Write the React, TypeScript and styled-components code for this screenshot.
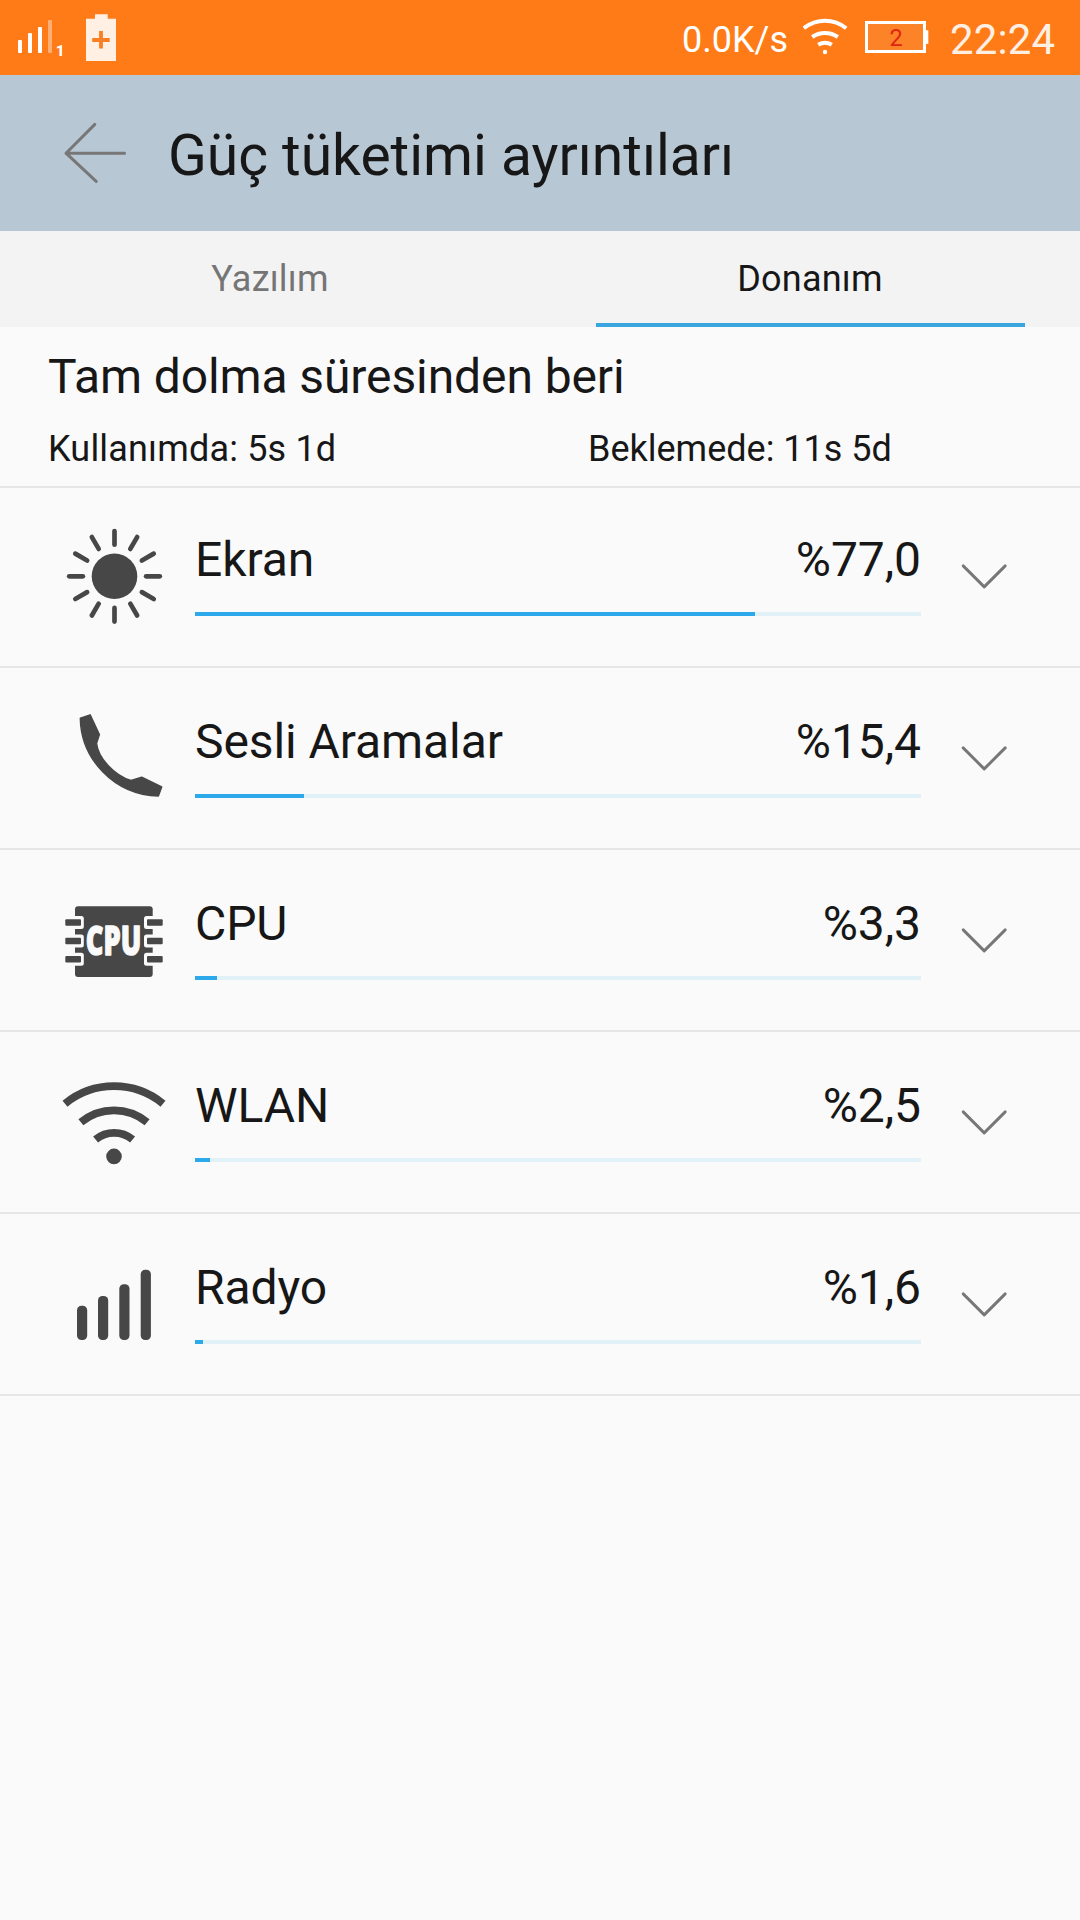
import React from 'react';
import styled, { createGlobalStyle } from 'styled-components';

const GlobalStyle = createGlobalStyle`
  body {
    margin: 0;
    background: #fafafa;
  }
`;

const ink = '#171717';
const iconInk = '#474747';
const cream = '#fff0e3';

const Screen = styled.div`
  display: flex;
  flex-direction: column;
  width: 1080px;
  height: 1920px;
  overflow: hidden;
  background: #fafafa;
  color: ${ink};
  font-family: Roboto, 'Noto Sans', sans-serif;
`;

const StatusBar = styled.header`
  display: flex;
  justify-content: space-between;
  height: 75px;
  flex: none;
  background: #ff7b17;
`;

const StatusGroup = styled.div`
  display: flex;
  align-items: flex-start;
`;

const Drawing = styled.svg`
  display: block;
  flex: none;
`;

const NetSpeed = styled.span`
  width: 121px;
  padding-top: 19px;
  font-size: 36px;
  line-height: 42px;
  color: #fff;
  white-space: nowrap;
`;

const Clock = styled.span`
  width: 130px;
  padding-top: 15px;
  font-size: 42px;
  line-height: 50px;
  letter-spacing: 0.1px;
  color: ${cream};
  white-space: nowrap;
`;

const TitleBar = styled.div`
  display: flex;
  height: 156px;
  flex: none;
  background: #b7c7d4;
`;

const Title = styled.h1`
  margin: 0;
  padding-top: 48px;
  font-size: 57px;
  font-weight: 400;
  line-height: 66px;
  letter-spacing: -0.03px;
  white-space: nowrap;
`;

const Tabs = styled.nav`
  display: grid;
  grid-template-columns: 1fr 1fr;
  height: 96px;
  flex: none;
  background: #f3f3f3;
`;

const Tab = styled.div<{ $active?: boolean }>`
  display: flex;
  justify-content: center;
  box-sizing: border-box;
  width: 429px;
  height: 96px;
  padding-top: 27px;
  justify-self: ${(p) => (p.$active ? 'start' : 'end')};
  margin: 0 55.5px;
  font-size: 36px;
  line-height: 42px;
  letter-spacing: 0.2px;
  color: ${(p) => (p.$active ? ink : '#757575')};
  border-bottom: 4px solid ${(p) => (p.$active ? '#3aa6e0' : 'transparent')};
`;

const Summary = styled.section`
  padding: 22px 48px 16px;
  border-bottom: 2px solid #e6e6e6;
`;

const SummaryTitle = styled.h2`
  margin: 0 0 23px;
  font-size: 48px;
  font-weight: 400;
  line-height: 56px;
  letter-spacing: -0.1px;
`;

const SummaryTimes = styled.div`
  display: grid;
  grid-template-columns: 540px 1fr;
  font-size: 36px;
  line-height: 42px;
`;

const SummaryTime = styled.span<{ $tracking?: number }>`
  letter-spacing: ${(p) => p.$tracking ?? 0}px;
`;

const List = styled.ul`
  margin: 0;
  padding: 0;
  list-style: none;
`;

const Row = styled.li`
  display: flex;
  align-items: flex-end;
  box-sizing: border-box;
  height: 182px;
  padding: 0 60px 35px;
  border-bottom: 2px solid #e6e6e6;

  &:first-child {
    height: 180px;
  }
`;

const RowBody = styled.div`
  width: 726px;
  margin: 0 26px 15px 25px;
`;

const RowLabels = styled.div`
  display: flex;
  justify-content: space-between;
  margin-bottom: 24px;
  font-size: 48px;
  line-height: 56px;
  letter-spacing: -0.08px;
`;

const Track = styled.div`
  height: 4px;
  background: #e1f1f8;
`;

const Fill = styled.div`
  height: 4px;
  background: #2ba9ea;
`;

const TRACK_WIDTH = 726;

const RowIcon = ({ children }: { children: React.ReactNode }) => (
  <Drawing width="110" height="110" viewBox="0 0 110 110" fill={iconInk}>
    {children}
  </Drawing>
);

const SunIcon = () => (
  <RowIcon>
    <circle cx="54.5" cy="55.3" r="22.8" />
    <g stroke={iconInk} strokeWidth="4.7" strokeLinecap="round">
      {Array.from({ length: 12 }, (_, i) => (
        <line
          key={i}
          x1="54.5"
          y1="23.7"
          x2="54.5"
          y2="10"
          transform={`rotate(${i * 30} 54.5 55.3)`}
        />
      ))}
    </g>
  </RowIcon>
);

const PhoneIcon = () => (
  <RowIcon>
    <path
      d="M20.3 15.2 L30.2 11.8 L39.4 31.6 L36.6 40.3 C38 55 55 73 71 77.4 L81.7 74.2 L101.7 84 L98.4 93 C54 92 21 56 20.3 15.2 Z"
      stroke={iconInk}
      strokeWidth="1.4"
      strokeLinejoin="round"
    />
  </RowIcon>
);

const pinRows = [34.3, 52.7, 71];

const CpuIcon = () => (
  <RowIcon>
    <rect x="15" y="21.2" width="77.7" height="70.8" rx="3" />
    {pinRows.map((y) => (
      <g key={y}>
        <rect x="5" y={y - 3.3} width="18.8" height="13" rx="2.5" fill="#fafafa" />
        <rect x="84" y={y - 3.3} width="19" height="13" rx="2.5" fill="#fafafa" />
        <rect x="5.3" y={y} width="15.7" height="6.5" rx="1" />
        <rect x="87" y={y} width="15.7" height="6.5" rx="1" />
      </g>
    ))}
    <text
      x="25.8"
      y="70.4"
      fill="#fafafa"
      stroke="#fafafa"
      strokeWidth="1.3"
      strokeLinejoin="round"
      fontFamily="'Open Sans', 'Noto Sans', sans-serif"
      fontWeight="800"
      fontSize="40"
      textLength="55.5"
      lengthAdjust="spacingAndGlyphs"
    >
      CPU
    </text>
  </RowIcon>
);

const WlanIcon = () => (
  <RowIcon>
    <g fill="none" stroke={iconInk} strokeWidth="7.8">
      <path d="M5 36.7 A77.3 77.3 0 0 1 103 36.7" />
      <path d="M20.9 55.3 A51.9 51.9 0 0 1 87.1 55.3" />
      <path d="M35.6 72.4 A29.2 29.2 0 0 1 72.6 72.4" />
    </g>
    <circle cx="54" cy="89.4" r="7.8" />
  </RowIcon>
);

const RadioIcon = () => (
  <RowIcon>
    <rect x="17" y="56.7" width="10.2" height="34.3" rx="4.5" />
    <rect x="38" y="47" width="10.2" height="44" rx="4.5" />
    <rect x="59.3" y="35.3" width="10.2" height="55.7" rx="4.5" />
    <rect x="80.7" y="20.7" width="10.2" height="70.3" rx="4.5" />
  </RowIcon>
);

const Chevron = () => (
  <Drawing width="70" height="110" viewBox="0 0 70 110" fill="none">
    <path
      d="M16.2 44.9 L37.2 65.9 L58.2 44.9"
      stroke="#777"
      strokeWidth="2.9"
      strokeLinecap="round"
      strokeLinejoin="round"
    />
  </Drawing>
);

const consumers = [
  { name: 'Ekran', share: '%77,0', level: 77, icon: <SunIcon /> },
  { name: 'Sesli Aramalar', share: '%15,4', level: 15, icon: <PhoneIcon /> },
  { name: 'CPU', share: '%3,3', level: 3, icon: <CpuIcon /> },
  { name: 'WLAN', share: '%2,5', level: 2, icon: <WlanIcon /> },
  { name: 'Radyo', share: '%1,6', level: 1, icon: <RadioIcon /> },
];

const StatusLeftIcons = () => (
  <Drawing width="130" height="75" viewBox="0 0 130 75">
    <g fill="#fff">
      <rect x="18" y="40" width="4" height="13" rx="1" />
      <rect x="28" y="33" width="4" height="20" rx="1" />
      <rect x="38" y="27" width="4" height="26" rx="1" />
      <rect x="48" y="20" width="4" height="33" rx="1" opacity="0.4" />
      <text x="55.8" y="56" fontFamily="Roboto, sans-serif" fontWeight="800" fontSize="15.5">
        1
      </text>
    </g>
    <path d="M86 18.7 H95 V14.3 H107.7 V18.7 H116 V61 H86 Z" fill={cream} />
    <path d="M92.2 40 H109.7 M101 31 V48.6" stroke="#f98022" strokeWidth="3.8" fill="none" />
  </Drawing>
);

const StatusWifi = () => (
  <Drawing width="61" height="75" viewBox="0 0 61 75">
    <g fill="none" stroke="#fff" strokeWidth="4">
      <path d="M0.8 28.2 A33.5 33.5 0 0 1 43.2 28.2" />
      <path d="M9.2 37 A22 22 0 0 1 34.8 37" />
      <path d="M15.2 44.8 A13 13 0 0 1 28.8 44.8" />
    </g>
    <circle cx="22" cy="52" r="2.2" fill="#fff" />
  </Drawing>
);

const StatusBattery = () => (
  <Drawing width="86" height="75" viewBox="0 0 86 75">
    <rect x="2.5" y="22.5" width="58" height="29" fill="#fc8328" stroke="#fff" strokeWidth="3" />
    <rect x="61.5" y="30.3" width="2.8" height="13.6" fill="#fff" />
    <text x="32" y="46" textAnchor="middle" fontFamily="Roboto, sans-serif" fontSize="23.5" fill="#e32412">
      2
    </text>
  </Drawing>
);

const BackArrow = () => (
  <Drawing width="168" height="156" viewBox="0 0 168 156" fill="none">
    <path
      d="M94.8 49.4 L66 78.2 L96.2 106.4 M66 78.2 H124.6"
      stroke="#777"
      strokeWidth="3"
      strokeLinecap="round"
      strokeLinejoin="round"
    />
  </Drawing>
);

export default function App() {
  return (
    <Screen>
      <GlobalStyle />
      <StatusBar>
        <StatusGroup>
          <StatusLeftIcons />
        </StatusGroup>
        <StatusGroup>
          <NetSpeed>0.0K/s</NetSpeed>
          <StatusWifi />
          <StatusBattery />
          <Clock>22:24</Clock>
        </StatusGroup>
      </StatusBar>
      <TitleBar>
        <BackArrow />
        <Title>Güç tüketimi ayrıntıları</Title>
      </TitleBar>
      <Tabs>
        <Tab>Yazılım</Tab>
        <Tab $active>Donanım</Tab>
      </Tabs>
      <Summary>
        <SummaryTitle>Tam dolma süresinden beri</SummaryTitle>
        <SummaryTimes>
          <SummaryTime $tracking={0.18}>Kullanımda: 5s 1d</SummaryTime>
          <SummaryTime>Beklemede: 11s 5d</SummaryTime>
        </SummaryTimes>
      </Summary>
      <List>
        {consumers.map((c) => (
          <Row key={c.name}>
            {c.icon}
            <RowBody>
              <RowLabels>
                <span>{c.name}</span>
                <span>{c.share}</span>
              </RowLabels>
              <Track>
                <Fill style={{ width: Math.ceil((TRACK_WIDTH * c.level) / 100) }} />
              </Track>
            </RowBody>
            <Chevron />
          </Row>
        ))}
      </List>
    </Screen>
  );
}
